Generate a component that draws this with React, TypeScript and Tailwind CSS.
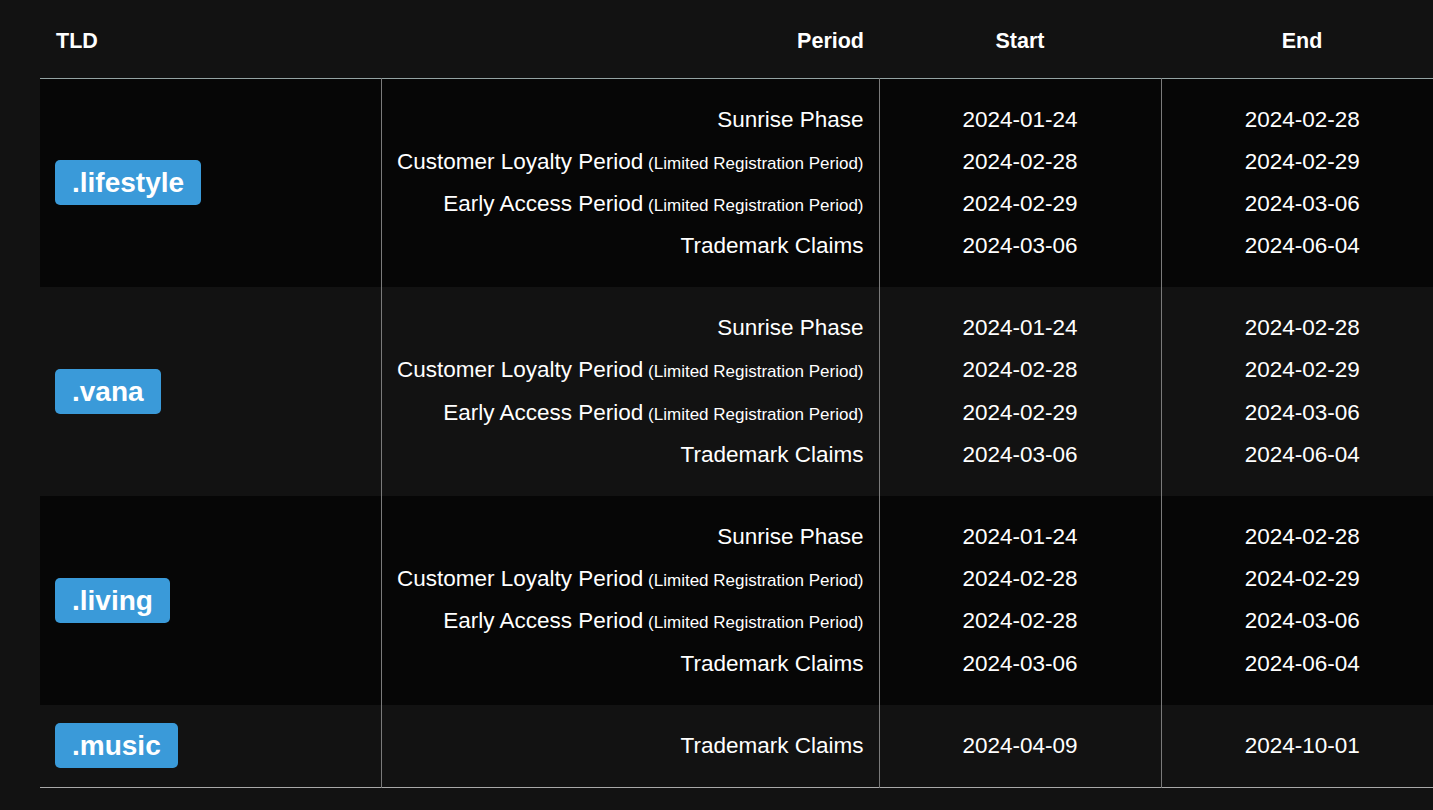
import React from 'react';

type Phase = {
  name: string;
  note?: string;
  start: string;
  end: string;
};

type Launch = {
  tld: string;
  phases: Phase[];
};

const LIMITED = '(Limited Registration Period)';

const launches: Launch[] = [
  {
    tld: '.lifestyle',
    phases: [
      { name: 'Sunrise Phase', start: '2024-01-24', end: '2024-02-28' },
      { name: 'Customer Loyalty Period', note: LIMITED, start: '2024-02-28', end: '2024-02-29' },
      { name: 'Early Access Period', note: LIMITED, start: '2024-02-29', end: '2024-03-06' },
      { name: 'Trademark Claims', start: '2024-03-06', end: '2024-06-04' },
    ],
  },
  {
    tld: '.vana',
    phases: [
      { name: 'Sunrise Phase', start: '2024-01-24', end: '2024-02-28' },
      { name: 'Customer Loyalty Period', note: LIMITED, start: '2024-02-28', end: '2024-02-29' },
      { name: 'Early Access Period', note: LIMITED, start: '2024-02-29', end: '2024-03-06' },
      { name: 'Trademark Claims', start: '2024-03-06', end: '2024-06-04' },
    ],
  },
  {
    tld: '.living',
    phases: [
      { name: 'Sunrise Phase', start: '2024-01-24', end: '2024-02-28' },
      { name: 'Customer Loyalty Period', note: LIMITED, start: '2024-02-28', end: '2024-02-29' },
      { name: 'Early Access Period', note: LIMITED, start: '2024-02-28', end: '2024-03-06' },
      { name: 'Trademark Claims', start: '2024-03-06', end: '2024-06-04' },
    ],
  },
  {
    tld: '.music',
    phases: [{ name: 'Trademark Claims', start: '2024-04-09', end: '2024-10-01' }],
  },
];

const LaunchRow: React.FC<{ launch: Launch; odd: boolean }> = ({ launch, odd }) => (
  <tr className={odd ? 'bg-[#060606]' : 'bg-[#121212]'}>
    <td className="px-[15px] py-[16px] align-middle">
      <span className="inline-block rounded-[5px] bg-[#3a9ad9] px-[17px] text-[28px] font-bold leading-[45px] text-white">
        {launch.tld}
      </span>
    </td>
    <td className="border-l border-[#7a7a7a] py-5 pr-[15px] text-right">
      {launch.phases.map((p) => (
        <div key={p.name} className="h-[42.2px] leading-[42.2px] whitespace-nowrap">
          {p.name}
          {p.note && <span className="text-[17px] leading-none"> {p.note}</span>}
        </div>
      ))}
    </td>
    <td className="border-l border-[#7a7a7a] py-5 text-center">
      {launch.phases.map((p) => (
        <div key={p.name} className="h-[42.2px] leading-[42.2px]">
          {p.start}
        </div>
      ))}
    </td>
    <td className="border-l border-[#7a7a7a] py-5 text-center">
      {launch.phases.map((p) => (
        <div key={p.name} className="h-[42.2px] leading-[42.2px]">
          {p.end}
        </div>
      ))}
    </td>
  </tr>
);

export default function App() {
  return (
    <div className="min-h-screen w-full overflow-hidden bg-[#121212] font-['Liberation_Sans',Arial,sans-serif] text-white">
      <div className="pl-10">
        <table className="w-[1403px] table-fixed border-collapse text-[22.5px]">
          <colgroup>
            <col className="w-[341px]" />
            <col className="w-[498px]" />
            <col className="w-[282px]" />
            <col className="w-[282px]" />
          </colgroup>
          <thead>
            <tr className="h-[78px] border-b border-[#94a3a3] text-[21.5px] font-bold">
              <th className="px-4 pt-1 text-left">TLD</th>
              <th className="pr-[15px] pt-1 text-right">Period</th>
              <th className="pt-1 text-center">Start</th>
              <th className="pt-1 text-center">End</th>
            </tr>
          </thead>
          <tbody className="border-b border-[#a8a8a8]">
            {launches.map((l, i) => (
              <LaunchRow key={l.tld} launch={l} odd={i % 2 === 0} />
            ))}
          </tbody>
        </table>
      </div>
    </div>
  );
}
